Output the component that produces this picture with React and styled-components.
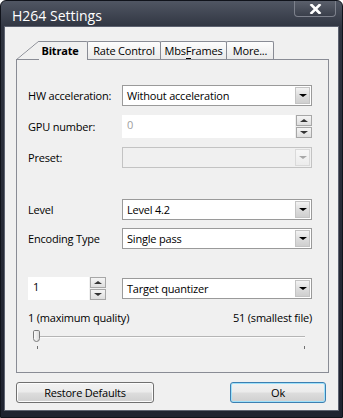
import React from 'react';
import styled, { createGlobalStyle } from 'styled-components';

const GlobalStyle = createGlobalStyle`
  html, body {
    margin: 0;
    padding: 0;
    background: #ffffff;
  }
  body {
    font-family: "Open Sans", "Noto Sans", sans-serif;
    font-size: 11px;
    letter-spacing: -0.2px;
    color: #000;
  }
`;

const Window = styled.div`
  width: 343px;
  height: 418px;
  box-sizing: border-box;
  display: flex;
  flex-direction: column;
  padding: 0 4px 7px;
  background: linear-gradient(#505663 0px, #2f3440 27px, #262a36 60%, #1f2330);
  border: 1px solid #10131b;
  border-radius: 6px 6px 0 0;
`;

const TitleBar = styled.div`
  height: 26px;
  flex: none;
  display: flex;
  justify-content: space-between;
  align-items: flex-start;
`;

const Title = styled.div`
  color: #fff;
  font-size: 14px;
  letter-spacing: 0;
  padding: 5px 0 0 7px;
`;

const CloseButton = styled.div`
  width: 42px;
  height: 16px;
  margin-right: 2px;
  box-sizing: border-box;
  display: flex;
  align-items: center;
  justify-content: center;
  border: 1px solid #7d818c;
  border-top: none;
  border-radius: 0 0 4px 4px;
  background: linear-gradient(#5b606c, #3a3f4b);
`;

const Client = styled.div`
  flex: 1;
  background: #f0f0f0;
  padding: 14px 0 0 11px;
  box-shadow: 0 0 0 1px #5d6270;
`;

const TabStrip = styled.div`
  display: flex;
  height: 18px;
  position: relative;
  z-index: 1;
`;

const Tab = styled.div`
  width: ${p => p.$w}px;
  height: 18px;
  box-sizing: border-box;
  margin-left: -1px;
  border: 1px solid #898c95;
  border-bottom: none;
  border-radius: 2px 2px 0 0;
  background: linear-gradient(#fdfdfd, #eaeaea);
  text-align: center;
  line-height: 17px;
  white-space: nowrap;

  u {
    text-decoration: none;
    border-bottom: 1px solid currentColor;
  }
`;

const ActiveTab = styled(Tab)`
  margin-left: 23px;
  height: 19px;
  border-left: none;
  border-radius: 0 2px 0 0;
  background: #f0f0f0;
  font-weight: bold;
  padding-right: 6px;
  position: relative;

  &::before {
    content: '';
    position: absolute;
    left: -23px;
    top: -1px;
    width: 23px;
    bottom: 0;
    background: linear-gradient(
      to top left,
      transparent calc(50% - 0.7px),
      #898c95 50%,
      transparent calc(50% + 0.7px)
    );
  }
`;

const Panel = styled.div`
  width: 313px;
  height: 314px;
  box-sizing: border-box;
  border: 1px solid #898c95;
  padding: 0 16px 0 11px;
`;

const Row = styled.div`
  display: grid;
  grid-template-columns: 94px 1fr;
  align-items: center;
  margin-top: ${p => p.$gap}px;
`;

const Label = styled.div`
  color: #000;
  white-space: nowrap;
`;

const Combo = styled.div`
  height: 21px;
  box-sizing: border-box;
  display: flex;
  align-items: stretch;
  border: 1px solid ${p => (p.$disabled ? '#c3c3c3' : '#9a9a9a')};
  background: ${p => (p.$disabled ? '#f0f0f0' : '#fff')};
  padding: 1px;
`;

const ComboText = styled.div`
  flex: 1;
  padding-left: 3px;
  line-height: 17px;
`;

const DropButton = styled.div`
  width: 15px;
  display: flex;
  align-items: center;
  justify-content: center;
  box-sizing: border-box;
  border: 1px solid ${p => (p.$disabled ? '#dadada' : '#c4c4c4')};
  background: ${p =>
    p.$disabled
      ? 'linear-gradient(#f7f7f7, #ececec)'
      : 'linear-gradient(#f3f3f3, #dcdcdc 55%, #cfcfcf)'};
`;

const Arrow = styled.div`
  width: 0;
  height: 0;
  border-left: ${p => p.$size}px solid transparent;
  border-right: ${p => p.$size}px solid transparent;
  ${p =>
    p.$up
      ? `border-bottom: ${p.$size - 1}px solid ${p.$color};`
      : `border-top: ${p.$size - 1}px solid ${p.$color};`}
`;

const SpinBox = styled.div`
  height: 23px;
  width: ${p => (p.$w ? `${p.$w}px` : 'auto')};
  display: flex;
`;

const SpinField = styled.div`
  flex: 1;
  background: #fff;
  color: ${p => (p.$disabled ? '#a0a0a0' : '#000')};
  padding: 2px 0 0 5px;
  margin-right: 1px;
`;

const SpinButtons = styled.div`
  width: 16px;
  display: flex;
  flex-direction: column;
  gap: 1px;
`;

const SpinButton = styled.div`
  flex: 1;
  display: flex;
  align-items: center;
  justify-content: center;
  box-sizing: border-box;
  border: 1px solid #a7a7a7;
  background: linear-gradient(#f5f5f5, #dedede);
`;

const Scale = styled.div`
  display: flex;
  justify-content: space-between;
  margin-top: 11px;
  line-height: 14px;
`;

const Slider = styled.div`
  position: relative;
  height: 22px;
  margin: 4px 5px 0 5px;
`;

const Track = styled.div`
  position: absolute;
  left: 3px;
  right: 2px;
  top: 7px;
  height: 1px;
  background: #b5b5b5;
  border-bottom: 1px solid #fbfbfb;
`;

const Thumb = styled.div`
  position: absolute;
  left: 0;
  top: 1px;
  width: 7px;
  height: 12px;
  box-sizing: border-box;
  border: 1px solid #7b7b7b;
  border-radius: 2px 2px 4px 4px;
  background: linear-gradient(90deg, #fafafa, #dcdcdc);
`;

const Tick = styled.div`
  position: absolute;
  top: 17px;
  width: 1px;
  height: 3px;
  background: #6f6f6f;
  ${p => (p.$right ? 'right: 2px;' : 'left: 4px;')}
`;

const ButtonRow = styled.div`
  display: flex;
  justify-content: space-between;
  width: 310px;
  margin-top: 9px;
`;

const Button = styled.div`
  width: ${p => p.$w}px;
  height: 21px;
  box-sizing: border-box;
  display: flex;
  align-items: center;
  justify-content: center;
  border: 1px solid ${p => (p.$default ? '#3c7fb1' : '#707070')};
  border-radius: 3px;
  background: linear-gradient(#f2f2f2, #ebebeb 48%, #dddddd 52%, #cfcfcf);
  box-shadow: inset 0 0 0 1px ${p => (p.$default ? '#9fe1fa' : '#fcfcfc')};
`;

const ComboBox = ({ value, disabled }) => (
  <Combo $disabled={disabled}>
    <ComboText>{value}</ComboText>
    <DropButton $disabled={disabled}>
      <Arrow $size={4} $color={disabled ? '#a8a8a8' : '#000'} />
    </DropButton>
  </Combo>
);

const Spinner = ({ value, disabled, width }) => (
  <SpinBox $w={width}>
    <SpinField $disabled={disabled}>{value}</SpinField>
    <SpinButtons>
      <SpinButton>
        <Arrow $up $size={4} $color="#333" />
      </SpinButton>
      <SpinButton>
        <Arrow $size={4} $color="#333" />
      </SpinButton>
    </SpinButtons>
  </SpinBox>
);

const CloseIcon = () => (
  <svg width="13" height="10" viewBox="0 0 13 10">
    <path d="M2.5 1 L10.5 9 M10.5 1 L2.5 9" stroke="#fff" strokeWidth="2.6" strokeLinecap="square" />
  </svg>
);

const App = () => (
  <>
    <GlobalStyle />
    <Window>
      <TitleBar>
        <Title>H264 Settings</Title>
        <CloseButton>
          <CloseIcon />
        </CloseButton>
      </TitleBar>
      <Client>
        <TabStrip>
          <ActiveTab $w={49}>Bitrate</ActiveTab>
          <Tab $w={74}>Rate Control</Tab>
          <Tab $w={67}>
            Mbs<u>F</u>rames
          </Tab>
          <Tab $w={48}>More...</Tab>
        </TabStrip>
        <Panel>
          <Row $gap={25}>
            <Label>HW acceleration:</Label>
            <ComboBox value="Without acceleration" />
          </Row>
          <Row $gap={9}>
            <Label>GPU number:</Label>
            <Spinner value="0" disabled />
          </Row>
          <Row $gap={9}>
            <Label>Preset:</Label>
            <ComboBox value="" disabled />
          </Row>
          <Row $gap={31}>
            <Label>Level</Label>
            <ComboBox value="Level 4.2" />
          </Row>
          <Row $gap={8}>
            <Label>Encoding Type</Label>
            <ComboBox value="Single pass" />
          </Row>
          <Row $gap={28}>
            <Spinner value="1" width={78} />
            <ComboBox value="Target quantizer" />
          </Row>
          <Scale>
            <span>1 (maximum quality)</span>
            <span>51 (smallest file)</span>
          </Scale>
          <Slider>
            <Track />
            <Thumb />
            <Tick />
            <Tick $right />
          </Slider>
        </Panel>
        <ButtonRow>
          <Button $w={138}>Restore Defaults</Button>
          <Button $w={96} $default>
            Ok
          </Button>
        </ButtonRow>
      </Client>
    </Window>
  </>
);

export default App;
